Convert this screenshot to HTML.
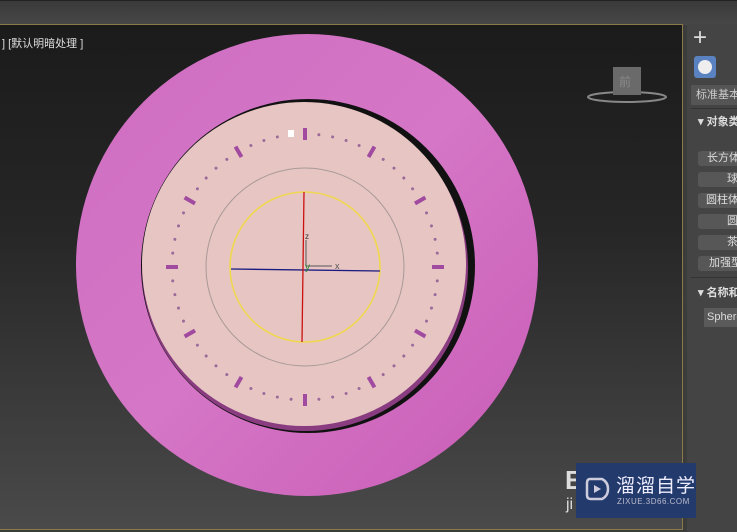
<!DOCTYPE html>
<html><head><meta charset="utf-8"><style>
html,body{margin:0;padding:0;width:737px;height:532px;overflow:hidden;background:#3c3c3c;font-family:"Liberation Sans","Noto Sans CJK SC",sans-serif}
.top{position:absolute;left:0;top:0;width:737px;height:24px;background:linear-gradient(#3a3a3a,#474747);border-top:1px solid #222}
.vp{position:absolute;left:0;top:24px;width:683px;height:506px;border:1px solid #8a7a48;border-left:none;background:linear-gradient(#1b1b1b 0%,#262626 40%,#4a4a4a 100%);box-sizing:border-box}
.lbl{position:absolute;left:2px;top:35px;color:#ddd;font-size:11px}
.panel{position:absolute;left:687px;top:24px;width:50px;height:508px;background:#444}
.btn{position:absolute;left:698px;width:60px;height:15px;background:#575757;border-radius:3px;color:#ddd;font-size:11px;line-height:15px;box-sizing:border-box;white-space:nowrap}
.wm{position:absolute;left:576px;top:463px;width:120px;height:55px;background:#233a6c}
.nw{white-space:nowrap}
</style></head><body>
<div class="top"></div>
<div class="vp"></div>
<div class="lbl">] [默认明暗处理 ]</div>
<svg width="737" height="532" style="position:absolute;left:0;top:0">
<defs><linearGradient id="pk" x1="0" y1="0" x2="1" y2="1"><stop offset="0" stop-color="#cf6ec2"/><stop offset="0.5" stop-color="#d576c6"/><stop offset="1" stop-color="#c85cb6"/></linearGradient></defs>
<circle cx="307" cy="265" r="231" fill="url(#pk)"/>
<circle cx="308" cy="266" r="167" fill="#111"/>
<circle cx="305" cy="268" r="163" fill="#8a3c80"/>
<circle cx="304" cy="264" r="162" fill="#e7c5c2"/>
<circle cx="305" cy="267" r="99" fill="none" stroke="#a89a98" stroke-width="1"/>
<g fill="#a04aa0">
<rect x="303" y="128" width="4" height="12" transform="rotate(0 305 267)"/>
<rect x="303" y="128" width="4" height="12" transform="rotate(30 305 267)"/>
<rect x="303" y="128" width="4" height="12" transform="rotate(60 305 267)"/>
<rect x="303" y="128" width="4" height="12" transform="rotate(90 305 267)"/>
<rect x="303" y="128" width="4" height="12" transform="rotate(120 305 267)"/>
<rect x="303" y="128" width="4" height="12" transform="rotate(150 305 267)"/>
<rect x="303" y="128" width="4" height="12" transform="rotate(180 305 267)"/>
<rect x="303" y="128" width="4" height="12" transform="rotate(210 305 267)"/>
<rect x="303" y="128" width="4" height="12" transform="rotate(240 305 267)"/>
<rect x="303" y="128" width="4" height="12" transform="rotate(270 305 267)"/>
<rect x="303" y="128" width="4" height="12" transform="rotate(300 305 267)"/>
<rect x="303" y="128" width="4" height="12" transform="rotate(330 305 267)"/>
</g>
<g fill="#9a6a9a">
<circle cx="305" cy="134" r="1.5" transform="rotate(6 305 267)"/><circle cx="305" cy="134" r="1.5" transform="rotate(12 305 267)"/><circle cx="305" cy="134" r="1.5" transform="rotate(18 305 267)"/><circle cx="305" cy="134" r="1.5" transform="rotate(24 305 267)"/>
<circle cx="305" cy="134" r="1.5" transform="rotate(36 305 267)"/><circle cx="305" cy="134" r="1.5" transform="rotate(42 305 267)"/><circle cx="305" cy="134" r="1.5" transform="rotate(48 305 267)"/><circle cx="305" cy="134" r="1.5" transform="rotate(54 305 267)"/>
<circle cx="305" cy="134" r="1.5" transform="rotate(66 305 267)"/><circle cx="305" cy="134" r="1.5" transform="rotate(72 305 267)"/><circle cx="305" cy="134" r="1.5" transform="rotate(78 305 267)"/><circle cx="305" cy="134" r="1.5" transform="rotate(84 305 267)"/>
<circle cx="305" cy="134" r="1.5" transform="rotate(96 305 267)"/><circle cx="305" cy="134" r="1.5" transform="rotate(102 305 267)"/><circle cx="305" cy="134" r="1.5" transform="rotate(108 305 267)"/><circle cx="305" cy="134" r="1.5" transform="rotate(114 305 267)"/>
<circle cx="305" cy="134" r="1.5" transform="rotate(126 305 267)"/><circle cx="305" cy="134" r="1.5" transform="rotate(132 305 267)"/><circle cx="305" cy="134" r="1.5" transform="rotate(138 305 267)"/><circle cx="305" cy="134" r="1.5" transform="rotate(144 305 267)"/>
<circle cx="305" cy="134" r="1.5" transform="rotate(156 305 267)"/><circle cx="305" cy="134" r="1.5" transform="rotate(162 305 267)"/><circle cx="305" cy="134" r="1.5" transform="rotate(168 305 267)"/><circle cx="305" cy="134" r="1.5" transform="rotate(174 305 267)"/>
<circle cx="305" cy="134" r="1.5" transform="rotate(186 305 267)"/><circle cx="305" cy="134" r="1.5" transform="rotate(192 305 267)"/><circle cx="305" cy="134" r="1.5" transform="rotate(198 305 267)"/><circle cx="305" cy="134" r="1.5" transform="rotate(204 305 267)"/>
<circle cx="305" cy="134" r="1.5" transform="rotate(216 305 267)"/><circle cx="305" cy="134" r="1.5" transform="rotate(222 305 267)"/><circle cx="305" cy="134" r="1.5" transform="rotate(228 305 267)"/><circle cx="305" cy="134" r="1.5" transform="rotate(234 305 267)"/>
<circle cx="305" cy="134" r="1.5" transform="rotate(246 305 267)"/><circle cx="305" cy="134" r="1.5" transform="rotate(252 305 267)"/><circle cx="305" cy="134" r="1.5" transform="rotate(258 305 267)"/><circle cx="305" cy="134" r="1.5" transform="rotate(264 305 267)"/>
<circle cx="305" cy="134" r="1.5" transform="rotate(276 305 267)"/><circle cx="305" cy="134" r="1.5" transform="rotate(282 305 267)"/><circle cx="305" cy="134" r="1.5" transform="rotate(288 305 267)"/><circle cx="305" cy="134" r="1.5" transform="rotate(294 305 267)"/>
<circle cx="305" cy="134" r="1.5" transform="rotate(306 305 267)"/><circle cx="305" cy="134" r="1.5" transform="rotate(312 305 267)"/><circle cx="305" cy="134" r="1.5" transform="rotate(318 305 267)"/><circle cx="305" cy="134" r="1.5" transform="rotate(324 305 267)"/>
<circle cx="305" cy="134" r="1.5" transform="rotate(336 305 267)"/><circle cx="305" cy="134" r="1.5" transform="rotate(342 305 267)"/><circle cx="305" cy="134" r="1.5" transform="rotate(348 305 267)"/><circle cx="305" cy="134" r="1.5" transform="rotate(354 305 267)"/>
</g>
<rect x="288" y="130" width="6" height="7" fill="#fff"/>
<circle cx="305" cy="267" r="75" fill="none" stroke="#f0d850" stroke-width="1.6"/>
<path d="M231 269 L380 271" stroke="#1a1a80" stroke-width="1.3"/>
<path d="M304 192 L302 342" stroke="#cc1010" stroke-width="1.3"/>
<path d="M306 266 L306 240 M306 266 L332 266" stroke="#555" stroke-width="1"/>
<text x="305" y="239" font-size="8" fill="#333" font-family="Liberation Sans">z</text>
<text x="335" y="269" font-size="9" fill="#555" font-family="Liberation Sans">x</text>
<text x="305" y="270" font-size="10" fill="#2a8a3a" font-family="Liberation Sans">y</text>
<ellipse cx="627" cy="97" rx="39" ry="5" fill="none" stroke="#888" stroke-width="2"/>
<rect x="613" y="67" width="28" height="28" fill="#6a6a6a"/>
<text x="619" y="86" font-size="12" fill="#888">前</text>
</svg>
<div class="panel"></div>
<div style="position:absolute;left:693px;top:26px;color:#ddd;font-size:24px;line-height:24px">+</div>
<div style="position:absolute;left:694px;top:56px;width:22px;height:22px;background:#5a82c0;border-radius:3px"><div style="margin:4px;width:14px;height:14px;border-radius:50%;background:#eee"></div></div>
<div class="nw" style="position:absolute;left:691px;top:85px;width:50px;height:20px;background:#555;color:#ccc;font-size:11px;line-height:20px;padding-left:5px">标准基本</div>
<div style="position:absolute;left:691px;top:108px;width:46px;height:1px;background:#333"></div>
<div class="nw" style="position:absolute;left:698px;top:113px;color:#ddd;font-size:11px;font-weight:bold">▾ 对象类型</div>
<div class="btn" style="top:151px;padding-left:9px">长方体</div>
<div class="btn" style="top:172px;padding-left:29px">球体</div>
<div class="btn" style="top:193px;padding-left:8px">圆柱体</div>
<div class="btn" style="top:214px;padding-left:29px">圆环</div>
<div class="btn" style="top:235px;padding-left:29px">茶壶</div>
<div class="btn" style="top:256px;padding-left:11px">加强型</div>
<div style="position:absolute;left:691px;top:277px;width:46px;height:1px;background:#333"></div>
<div class="nw" style="position:absolute;left:698px;top:284px;color:#ddd;font-size:11px;font-weight:bold">▾ 名称和颜色</div>
<div class="nw" style="position:absolute;left:704px;top:308px;width:40px;height:19px;background:#5a5a5a;color:#ddd;font-size:11px;line-height:19px;padding-left:3px">Sphere001</div>
<div style="position:absolute;left:565px;top:465px;color:#ddd;font-size:26px;font-weight:bold">E</div>
<div style="position:absolute;left:566px;top:496px;color:#ddd;font-size:16px">ji</div>
<div class="wm">
<svg width="30" height="30" style="position:absolute;left:6px;top:11px"><path d="M8 5 Q5 5 5 9 L5 21 Q5 25 9 25 L20 25 Q26 22 26 15 Q26 8 20 5 Z" fill="none" stroke="#ccd" stroke-width="2.5"/><path d="M12 11 L19 15 L12 19 Z" fill="#ccd"/></svg>
<div class="nw" style="position:absolute;left:40px;top:8px;color:#eef;font-size:19px;letter-spacing:1px">溜溜自学</div>
<div class="nw" style="position:absolute;left:41px;top:34px;color:#bbc;font-size:8px;letter-spacing:0.5px">ZIXUE.3D66.COM</div>
</div>
</body></html>
